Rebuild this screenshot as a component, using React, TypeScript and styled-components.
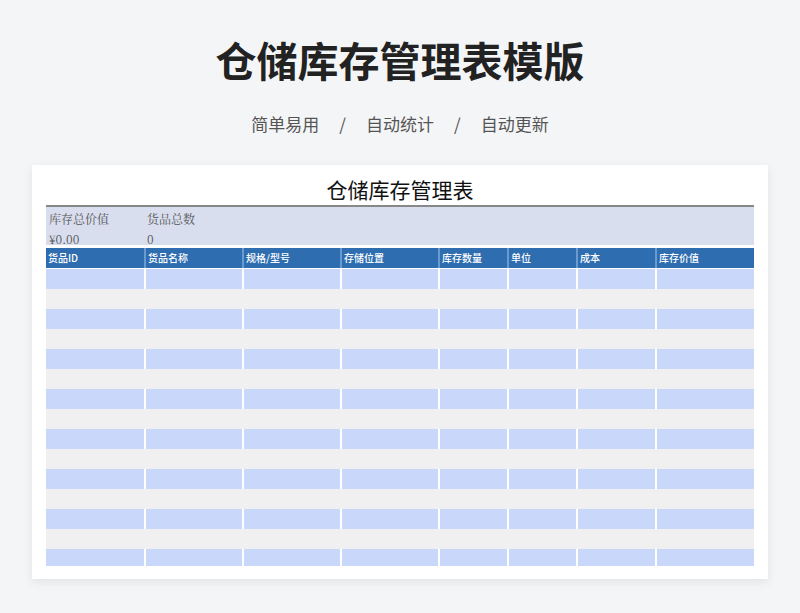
import styled, { createGlobalStyle } from 'styled-components';

const Global = createGlobalStyle`
  body { margin: 0; background: #f4f5f7; font-family: "Noto Sans CJK SC", "Noto Sans", sans-serif; }
`;

const Page = styled.div`
  width: 800px;
  height: 613px;
  display: flex;
  flex-direction: column;
  align-items: center;
  overflow: hidden;
`;

const Title = styled.h1`
  margin: 30px 0 0;
  height: 58px;
  font-size: 41px;
  font-weight: 700;
  color: #222;
  line-height: 58px;
`;

const Subtitle = styled.div`
  margin-top: 24px;
  display: flex;
  gap: 20px;
  font-size: 17px;
  color: #555;
  line-height: 24px;
`;

const Card = styled.div`
  margin-top: 29px;
  width: 736px;
  height: 414px;
  box-sizing: border-box;
  background: #fff;
  padding: 8px 14px 0;
  box-shadow: 0 3px 10px rgba(0, 0, 0, 0.08);
`;

const SheetTitle = styled.div`
  text-align: center;
  font-family: "Noto Sans CJK SC", "Liberation Serif", serif;
  font-size: 21px;
  color: #111;
  line-height: 32px;
  border-bottom: 2px solid #888;
`;

const Summary = styled.div`
  background: #d9deef;
  height: 38px;
  display: grid;
  grid-template-columns: 98px 98px 1fr;
  grid-template-rows: 20px 18px;
  font-family: "Noto Serif CJK SC", "Noto Sans CJK SC", "Liberation Serif", serif;
  font-size: 12px;
  color: #555;
  margin-bottom: 3px;
`;

const SumCell = styled.div`
  padding: 3px 0 0 3px;
`;

const Grid = styled.div`
  height: 318px;
  overflow: hidden;
`;

const Row = styled.div<{ $kind: 'head' | 'blue' | 'gray' }>`
  display: grid;
  grid-template-columns: 98px 98px 98px 98px 69px 69px 79px 1fr;
  height: 20px;
  margin-bottom: ${p => (p.$kind === 'head' ? '1px' : '0')};
  background: ${p => (p.$kind === 'head' ? '#2e6db0' : p.$kind === 'blue' ? '#c9d7fb' : '#f0f0f0')};
`;

const Cell = styled.div<{ $kind: 'head' | 'blue' | 'gray' }>`
  border-left: 2px solid ${p => (p.$kind === 'head' ? '#6a9ad0' : p.$kind === 'blue' ? '#fff' : 'transparent')};
  &:first-child { border-left: none; }
  padding-left: 2px;
  color: #fff;
  font-family: "Noto Sans CJK SC", "Liberation Serif", serif;
  font-size: 10px;
  font-weight: 500;
  line-height: 20px;
  white-space: nowrap;
`;

const heads = ['货品ID', '货品名称', '规格/型号', '存储位置', '库存数量', '单位', '成本', '库存价值'];

export default function App() {
  const rows = Array.from({ length: 15 }, (_, i) => (i % 2 === 0 ? 'blue' : 'gray') as 'blue' | 'gray');
  return (
    <Page>
      <Global />
      <Title>仓储库存管理表模版</Title>
      <Subtitle>
        <span>简单易用</span><span>/</span><span>自动统计</span><span>/</span><span>自动更新</span>
      </Subtitle>
      <Card>
        <SheetTitle>仓储库存管理表</SheetTitle>
        <Summary>
          <SumCell>库存总价值</SumCell>
          <SumCell>货品总数</SumCell>
          <SumCell />
          <SumCell>¥0.00</SumCell>
          <SumCell>0</SumCell>
          <SumCell />
        </Summary>
        <Grid>
          <Row $kind="head">
            {heads.map(h => <Cell key={h} $kind="head">{h}</Cell>)}
          </Row>
          {rows.map((k, i) => (
            <Row key={i} $kind={k}>
              {heads.map(h => <Cell key={h} $kind={k} />)}
            </Row>
          ))}
        </Grid>
      </Card>
    </Page>
  );
}
